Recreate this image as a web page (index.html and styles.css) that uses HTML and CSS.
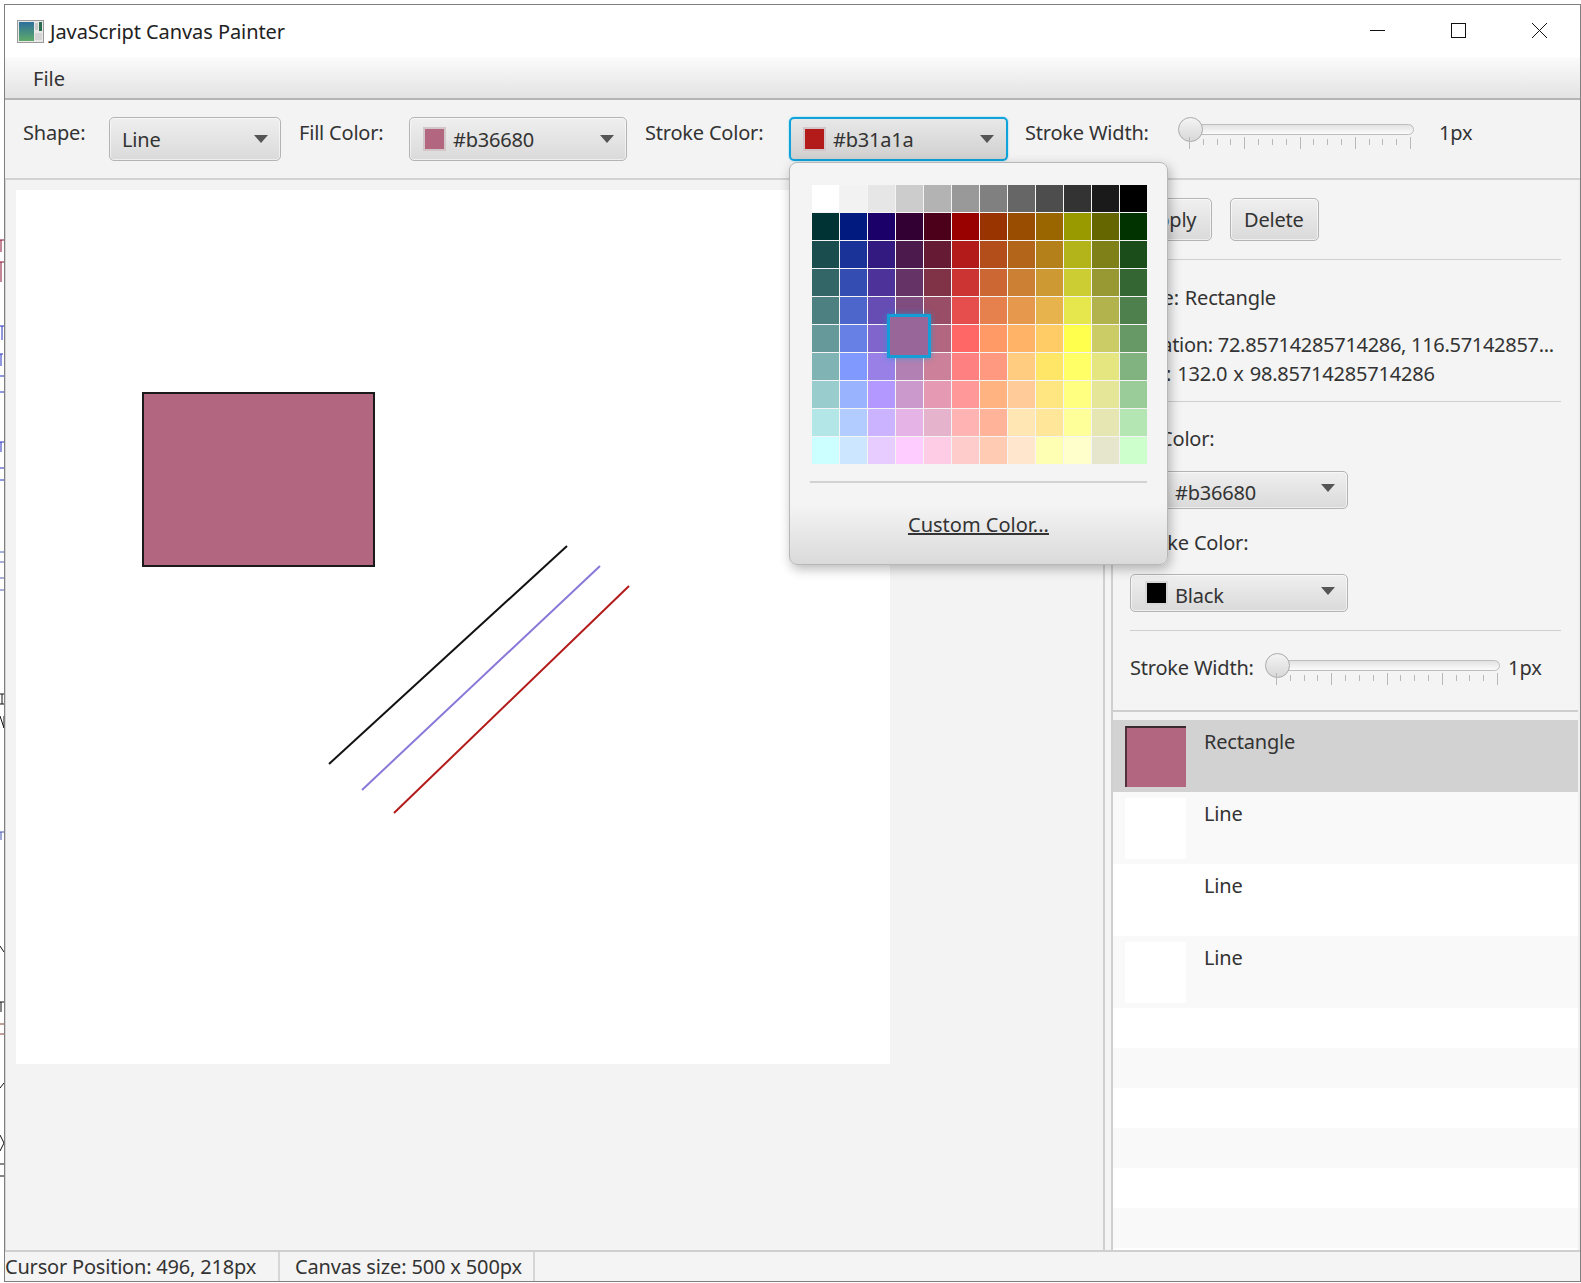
FILE: index.html
```html
<!DOCTYPE html>
<html lang="en">
<head>
    <meta charset="UTF-8">
    <meta name="viewport" content="width=device-width, initial-scale=1.0">
    <title>JavaScript Canvas Painter</title>
    <link rel="stylesheet" href="styles.css">
</head>
<body>
    <!-- bits of the desktop behind the window -->
    <svg class="behind" width="4" height="1283" aria-hidden="true">
        <path d="M0 240h4M1 240v12M0 262h4M1 262v20" stroke="#8a1030" fill="none"/>
        <path d="M0 326h4M2 326v14M0 354h3M1 354v12M0 376h4M0 392h4M0 442h4M1 442v10M0 468h4M0 480h4" stroke="#2230c0" fill="none"/>
        <path d="M0 552h4M0 562h4M0 578h4M0 590h4" stroke="#5060b0" fill="none"/>
        <path d="M0 694h4M0 704h4M2 694v10M0 716l4 12M4 716v12" stroke="#111" fill="none"/>
        <path d="M0 832h4M1 832v8" stroke="#4050b0" fill="none"/>
        <path d="M0 946l4 6M0 1002h4M1 1002v10M0 1088l4-5M0 1135l4 8-4 8M0 1164h4M0 1176h4" stroke="#111" fill="none"/>
        <path d="M0 1024h4M0 1034h4" stroke="#804030" fill="none"/>
    </svg>

    <div class="window">
        <header class="titlebar">
            <svg class="app-icon" width="27" height="23" viewBox="0 0 27 23">
                <defs>
                    <linearGradient id="icon-fill" x1="0" y1="0" x2="0" y2="1">
                        <stop offset="0" stop-color="#2c6f9c"/>
                        <stop offset="1" stop-color="#5faa68"/>
                    </linearGradient>
                </defs>
                <rect x="0.5" y="0.5" width="26" height="22" fill="#e8e8e8" stroke="#9a9a9a"/>
                <rect x="2" y="2" width="15" height="19" fill="url(#icon-fill)"/>
                <rect x="18" y="3" width="3" height="7" fill="#c8c8c8"/>
                <rect x="22" y="2" width="3" height="9" fill="#2b6d50"/>
                <rect x="18" y="13" width="7" height="7" fill="#d4d4d4"/>
            </svg>
            <span class="app-title">JavaScript Canvas Painter</span>
            <div class="win-controls">
                <svg width="15" height="15" viewBox="0 0 15 15"><path d="M0 7.5h15" stroke="#111"/></svg>
                <svg width="15" height="15" viewBox="0 0 15 15"><rect x="0.5" y="0.5" width="14" height="14" fill="none" stroke="#111"/></svg>
                <svg width="15" height="15" viewBox="0 0 15 15"><path d="M0 0l15 15M15 0L0 15" stroke="#111"/></svg>
            </div>
        </header>

        <nav class="menubar"><span class="menu-item">File</span></nav>

        <div class="toolbar">
            <label class="tool-label label-shape">Shape:</label>
            <div class="combo combo-shape">
                <span class="combo-text">Line</span>
                <span class="arrow"></span>
            </div>
            <label class="tool-label label-fill">Fill Color:</label>
            <div class="combo combo-fill">
                <span class="swatch swatch-fill"></span>
                <span class="combo-text">#b36680</span>
                <span class="arrow"></span>
            </div>
            <label class="tool-label label-stroke">Stroke Color:</label>
            <div class="combo combo-stroke focused">
                <span class="swatch swatch-stroke"></span>
                <span class="combo-text">#b31a1a</span>
                <span class="arrow"></span>
            </div>
            <label class="tool-label label-width">Stroke Width:</label>
            <div class="slider">
                <div class="track"></div>
                <div class="thumb"></div>
                <div class="ticks"><i></i><i></i><i></i><i></i><i></i><i></i><i></i><i></i><i></i><i></i><i></i><i></i><i></i><i></i><i></i><i></i><i></i></div>
            </div>
            <span class="tool-label label-px">1px</span>
        </div>

        <main class="workspace">
            <section class="canvas-pane">
                <svg class="canvas" width="874" height="874" viewBox="0 0 874 874">
                    <rect x="127" y="203" width="231" height="173" fill="#b36680" stroke="#1a1a1a" stroke-width="2"/>
                    <line x1="313" y1="574" x2="551" y2="356" stroke="#111" stroke-width="2"/>
                    <line x1="346" y1="600" x2="584" y2="376" stroke="#8a78d8" stroke-width="2"/>
                    <line x1="378" y1="623" x2="613" y2="396" stroke="#b31a1a" stroke-width="2"/>
                </svg>
            </section>

            <div class="divider"></div>

            <aside class="sidebar">
                <div class="props">
                    <div class="actions">
                        <button class="btn">Apply</button>
                        <button class="btn">Delete</button>
                    </div>
                    <hr class="sep sep-actions">
                    <p class="info info-type">Type: Rectangle</p>
                    <p class="info info-location">Location: 72.85714285714286, 116.57142857...</p>
                    <p class="info info-size">Size: 132.0 x 98.85714285714286</p>
                    <hr class="sep sep-info">
                    <p class="info prop-label">Fill Color:</p>
                    <div class="combo combo-side">
                        <span class="swatch swatch-fill"></span>
                        <span class="combo-text">#b36680</span>
                        <span class="arrow"></span>
                    </div>
                    <p class="info prop-label prop-label-stroke">Stroke Color:</p>
                    <div class="combo combo-side combo-side-stroke">
                        <span class="swatch swatch-black"></span>
                        <span class="combo-text">Black</span>
                        <span class="arrow"></span>
                    </div>
                    <hr class="sep sep-combo">
                    <div class="width-row">
                        <span class="width-label">Stroke Width:</span>
                        <div class="slider slider-side">
                            <div class="track"></div>
                            <div class="thumb"></div>
                            <div class="ticks"><i></i><i></i><i></i><i></i><i></i><i></i><i></i><i></i><i></i><i></i><i></i><i></i><i></i><i></i><i></i><i></i><i></i></div>
                        </div>
                        <span class="width-value">1px</span>
                    </div>
                </div>

                <ul class="shape-list">
                    <li class="shape-row selected"><span class="thumbnail thumbnail-rect"></span>Rectangle</li>
                    <li class="shape-row odd"><span class="thumbnail"></span>Line</li>
                    <li class="shape-row"><span class="thumbnail"></span>Line</li>
                    <li class="shape-row odd"><span class="thumbnail"></span>Line</li>
                    <li class="empty-row"></li>
                    <li class="empty-row odd"></li>
                    <li class="empty-row"></li>
                    <li class="empty-row odd"></li>
                    <li class="empty-row"></li>
                    <li class="empty-row odd"></li>
                </ul>
            </aside>
        </main>

        <footer class="statusbar">
            <span class="status-cell status-cursor">Cursor Position: 496, 218px</span>
            <span class="status-cell status-canvas">Canvas size: 500 x 500px</span>
        </footer>
    </div>

    <div class="color-popup">
        <div class="palette" id="palette">
            <span class="hovered-cell"></span>
        </div>
        <hr class="popup-sep">
        <a class="custom-color">Custom Color...</a>
    </div>

    <script>
        // JavaFX color picker palette, row by row
        const paletteColors = [
            '#ffffff', '#f2f2f2', '#e6e6e6', '#cccccc', '#b3b3b3', '#999999', '#808080', '#666666', '#4d4d4d', '#333333', '#1a1a1a', '#000000',
            '#003333', '#001a80', '#1a0068', '#330033', '#4d001a', '#990000', '#993300', '#994d00', '#996600', '#999900', '#666600', '#003300',
            '#1a4d4d', '#1a3399', '#331a80', '#4d1a4d', '#661a33', '#b31a1a', '#b34d1a', '#b3661a', '#b3801a', '#b3b31a', '#808019', '#1a4d1a',
            '#336666', '#334db3', '#4d3399', '#663366', '#803347', '#cc3333', '#cc6633', '#cc8033', '#cc9933', '#cccc33', '#999933', '#336633',
            '#4d8080', '#4d66cc', '#664db3', '#804d80', '#994d66', '#e64d4d', '#e6804d', '#e6994d', '#e6b34d', '#e6e64d', '#b3b34d', '#4d804d',
            '#669999', '#6680e6', '#8066cc', '#996699', '#b36680', '#ff6666', '#ff9966', '#ffb366', '#ffcc66', '#ffff4d', '#cccc66', '#669966',
            '#80b3b3', '#8099ff', '#9980e6', '#b380b3', '#cc8099', '#ff8080', '#ff9980', '#ffcc80', '#ffe666', '#ffff66', '#e6e680', '#80b380',
            '#99cccc', '#99b3ff', '#b399ff', '#cc99cc', '#e699b3', '#ff9999', '#ffb380', '#ffcc99', '#ffe680', '#ffff80', '#e6e699', '#99cc99',
            '#b3e6e6', '#b3ccff', '#ccb3ff', '#e6b3e6', '#e6b3cc', '#ffb3b3', '#ffb399', '#ffe6b3', '#ffe699', '#ffff99', '#e6e6b3', '#b3e6b3',
            '#ccffff', '#cce6ff', '#e6ccff', '#ffccff', '#ffcce6', '#ffcccc', '#ffccb3', '#ffe6cc', '#ffffb3', '#ffffcc', '#e6e6cc', '#ccffcc'
        ];

        const palette = document.getElementById('palette');

        paletteColors.forEach((color) => {
            const cell = document.createElement('span');
            cell.className = 'palette-cell';
            cell.style.backgroundColor = color;
            palette.appendChild(cell);
        });
    </script>
</body>
</html>
```

FILE: styles.css
```css
* {
    box-sizing: border-box;
}
body {
    margin: 0;
    width: 1581px;
    height: 1283px;
    overflow: hidden;
    position: relative;
    background-color: #fff;
    font-family: "Noto Sans", "Open Sans", sans-serif;
    font-size: 20px;
    color: #333;
}
.behind {
    position: absolute;
    left: 0;
    top: 0;
}
.window {
    margin: 4px 0 0 4px;
    width: 1577px;
    height: 1278px;
    border: 1px solid #7f7f7f;
    background-color: #f4f4f4;
    display: flex;
    flex-direction: column;
}

/* title bar */
.titlebar {
    height: 52px;
    flex: none;
    display: flex;
    align-items: center;
    background-color: #fff;
    padding-left: 12px;
}
.app-icon {
    margin-right: 6px;
}
.app-title {
    color: #222;
    letter-spacing: -0.07px;
}
.win-controls {
    margin-left: auto;
    display: flex;
    gap: 66px;
    padding-right: 33px;
    margin-top: -1px;
}

/* menu */
.menubar {
    height: 43px;
    flex: none;
    background: linear-gradient(#fbfbfb, #e3e3e3);
    border-bottom: 2px solid #b4b4b4;
    padding-left: 28px;
    line-height: 43px;
}

/* toolbar */
.toolbar {
    height: 80px;
    flex: none;
    display: flex;
    gap: 18px;
    padding: 17px 0 0 18px;
    border-bottom: 2px solid #d2d2d2;
    background-color: #f3f3f3;
}
.tool-label {
    height: 30px;
    margin-top: 1px;
    line-height: 30px;
    letter-spacing: -0.2px;
    white-space: nowrap;
}
.label-shape { width: 68px; }
.label-fill { width: 92px; }
.label-stroke { width: 126px; }
.label-width { width: 135px; margin-left: -1px; }
.label-px { margin-left: 7px; }

.combo {
    height: 44px;
    display: flex;
    align-items: center;
    padding: 0 12px 0 12px;
    border: 1px solid #b4b4b4;
    border-radius: 5px;
    background: linear-gradient(#efefef, #dadada);
    box-shadow: inset 0 0 0 1px rgba(255,255,255,0.55);
}
.combo-text {
    padding-top: 1px;
    letter-spacing: -0.2px;
    white-space: nowrap;
}
.combo-shape { width: 172px; }
.combo-fill { width: 218px; padding-left: 13px; }
.combo-stroke { width: 219px; }
.combo.focused {
    border: 2px solid #0ea3da;
    box-shadow: 0 0 2px #6fcbee;
    background: linear-gradient(#e8e8e8, #d0d0d0);
}
.arrow {
    margin-left: auto;
    width: 0;
    height: 0;
    border-left: 7px solid transparent;
    border-right: 7px solid transparent;
    border-top: 8px solid #555;
}
.swatch {
    width: 23px;
    height: 24px;
    margin-right: 7px;
    border: 2px solid #d2c6c9;
    flex: none;
}
.swatch-fill { background-color: #b36680; }
.swatch-stroke { background-color: #b31a1a; }
.swatch-black { background-color: #000; border-color: #d8d8d8; }

/* slider */
.slider {
    width: 236px;
    height: 34px;
    position: relative;
}
.track {
    position: absolute;
    left: 6px;
    right: 0;
    top: 7px;
    height: 11px;
    border: 1px solid #bdbdbd;
    border-radius: 6px;
    background: linear-gradient(#e2e2e2, #fbfbfb);
}
.thumb {
    position: absolute;
    left: 0;
    top: 0;
    width: 25px;
    height: 25px;
    border-radius: 50%;
    border: 1px solid #aaa;
    background: linear-gradient(#f4f4f4, #d8d8d8);
}
.ticks {
    position: absolute;
    left: 11px;
    width: 222px;
    top: 20px;
    height: 12px;
    display: flex;
    justify-content: space-between;
}
.ticks i {
    width: 1px;
    height: 6px;
    margin-top: 2px;
    background-color: #b8b8b8;
}
.ticks i:nth-child(4n+1) {
    height: 12px;
    margin-top: 0;
}

/* main area */
.workspace {
    flex: 1;
    min-height: 0;
    display: flex;
}
.canvas-pane {
    width: 1098px;
    flex: none;
    padding: 10px 0 0 10px;
    border-left: 1px solid #d4d4d4;
    background-color: #f3f3f3;
}
.canvas {
    display: block;
    background-color: #fff;
}
.divider {
    width: 10px;
    flex: none;
    border-left: 2px solid #cfcfcf;
    border-right: 2px solid #cfcfcf;
    background-color: #f4f4f4;
}

/* sidebar */
.sidebar {
    flex: 1;
    min-width: 0;
    display: flex;
    flex-direction: column;
    border-right: 2px solid #f0f0f0;
}
.props {
    height: 532px;
    flex: none;
    padding: 18px 17px 0 17px;
    border-bottom: 2px solid #cecece;
}
.actions {
    display: flex;
    gap: 18px;
}
.btn {
    height: 43px;
    padding: 0 14px 0 13px;
    font: inherit;
    color: #333;
    letter-spacing: -0.2px;
    border: 1px solid #b4b4b4;
    border-radius: 5px;
    background: linear-gradient(#efefef, #dadada);
    box-shadow: inset 0 0 0 1px rgba(255,255,255,0.55);
}
.btn:first-child {
    width: 82px;
}
.sep {
    margin: 0;
    border: none;
    height: 1px;
    background-color: #cfcfcf;
}
.sep-actions { margin-top: 18px; }
.sep-info { margin-top: 12px; }
.sep-combo { margin-top: 18px; }
.info {
    margin: 0;
    height: 30px;
    line-height: 30px;
    letter-spacing: -0.2px;
    white-space: nowrap;
}
.info-type {
    margin-top: 23px;
    word-spacing: 1px;
}
.info-location {
    margin-top: 17px;
    letter-spacing: -0.3px;
}
.info-size {
    margin-top: -1px;
    word-spacing: 1px;
}
.prop-label { margin-top: 22px; margin-bottom: 17px; }
.prop-label-stroke { margin-top: 19px; margin-bottom: 16px; }
.combo-side {
    width: 218px;
    height: 38px;
    padding: 0 12px 0 14px;
}
.combo-side .combo-text {
    padding-top: 4px;
}
.combo-side .arrow {
    margin-bottom: 4px;
}
.width-row {
    margin-top: 22px;
    display: flex;
}
.width-label {
    width: 135px;
    height: 30px;
    line-height: 30px;
    letter-spacing: -0.2px;
    white-space: nowrap;
}
.slider-side {
    width: 235px;
}
.width-value {
    margin-left: 8px;
    line-height: 30px;
}

/* list of shapes */
.shape-list {
    flex: 1;
    margin: 8px 0 0;
    padding: 0;
    list-style: none;
    background-color: #fff;
    overflow: hidden;
}
.shape-row {
    height: 72px;
    padding: 6px 12px;
    display: flex;
    align-items: flex-start;
    gap: 18px;
    line-height: 32px;
    letter-spacing: -0.2px;
}
.shape-row.selected {
    background-color: #d2d2d2;
}
.odd {
    background-color: #f9f9f9;
}
.thumbnail {
    width: 61px;
    height: 61px;
    background-color: #fff;
    flex: none;
}
.thumbnail-rect {
    background-color: #b36680;
    border-top: 2px solid #3a2a30;
    border-left: 2px solid #50323e;
}
.empty-row {
    height: 40px;
}

/* status bar */
.statusbar {
    height: 31px;
    flex: none;
    display: flex;
    border-top: 2px solid #cfcfcf;
    background-color: #f4f4f4;
    line-height: 29px;
    letter-spacing: -0.2px;
}
.status-cell {
    border-right: 2px solid #d6d6d6;
    white-space: nowrap;
}
.status-cursor {
    width: 275px;
}
.status-canvas {
    width: 255px;
    padding-left: 15px;
    letter-spacing: -0.15px;
}

/* color picker popup */
.color-popup {
    position: absolute;
    left: 789px;
    top: 162px;
    width: 379px;
    height: 403px;
    padding: 22px 20px 0 22px;
    border: 1px solid #b8b8b8;
    border-radius: 8px;
    background: linear-gradient(#f4f4f4 0, #f4f4f4 85%, #dadada 100%);
    box-shadow: 2px 4px 12px rgba(0,0,0,0.28);
}
.palette {
    position: relative;
    display: grid;
    grid-template-columns: repeat(12, 27px);
    grid-auto-rows: 27px;
    gap: 1px;
    width: 335px;
}
.palette-cell {
    display: block;
}
.hovered-cell {
    position: absolute;
    left: 75px;
    top: 129px;
    width: 44px;
    height: 44px;
    z-index: 1;
    background-color: #996699;
    border: 3px solid #149dd6;
    box-shadow: 0 0 6px rgba(20,157,214,0.6);
}
.popup-sep {
    margin: 17px 0 0 -2px;
    border: none;
    height: 2px;
    background-color: #d2d2d2;
}
.custom-color {
    display: block;
    margin: 28px 0 0 96px;
    text-decoration: underline;
    color: #333;
    white-space: nowrap;
}
```
